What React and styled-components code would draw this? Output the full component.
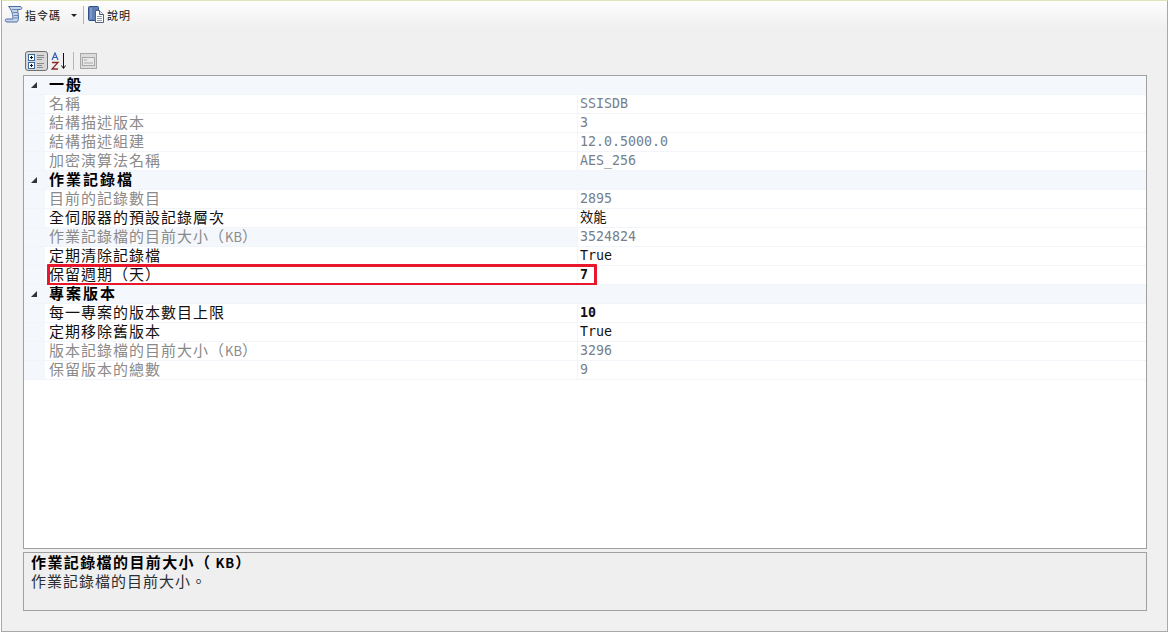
import React from "react";
import styled, { createGlobalStyle } from "styled-components";

const GlobalStyle = createGlobalStyle`
  html, body {
    margin: 0;
    padding: 0;
    background: #fff;
  }
`;

const cjk = `"Noto Sans CJK TC", "Noto Sans", sans-serif`;
const mono = `"DejaVu Sans Mono", "Liberation Mono", monospace`;

const Page = styled.div`
  width: 1167px;
  height: 632px;
  margin-left: 1px;
  box-sizing: border-box;
  display: flex;
  flex-direction: column;
  background: #f0f0f0;
  border-top: 1px solid #dfe3b8;
  border-left: 1px solid #a9a9a9;
  border-right: 1px solid #a9a9a9;
  border-bottom: 1px solid #a9a9a9;
  font-family: ${cjk};
`;

const Toolbar = styled.div`
  height: 27px;
  flex: none;
  display: flex;
  align-items: center;
  padding-left: 2px;
  background: linear-gradient(#fdfdfd, #f0f0f0);
`;

const ToolButton = styled.div`
  display: flex;
  align-items: center;
  gap: 1px;
  font-size: 11px;
  letter-spacing: 1px;
  color: #111;
`;

const Caret = styled.span`
  width: 0;
  height: 0;
  margin: 2px 6px 0 10px;
  border-left: 3px solid transparent;
  border-right: 3px solid transparent;
  border-top: 3px solid #222;
`;

const Sep = styled.span`
  width: 1px;
  height: 18px;
  margin-right: 3px;
  background: #b5b5b5;
`;

const Content = styled.div`
  flex: 1;
  display: flex;
  flex-direction: column;
  padding: 21px 20px 20px 21px;
  min-height: 0;
`;

const GridBar = styled.div`
  height: 26px;
  flex: none;
  box-sizing: border-box;
  display: flex;
  align-items: center;
  gap: 3px;
  padding: 0 0 2px 2px;

  ${Sep} {
    margin: 0 3px 0 2px;
  }
`;

const ModeButton = styled.div`
  width: ${(p) => (p.$active ? "23px" : "17px")};
  height: ${(p) => (p.$active ? "20px" : "16px")};
  display: flex;
  align-items: center;
  justify-content: center;
  box-sizing: border-box;
  border-radius: 3px;
  border: ${(p) => (p.$active ? "1px solid #6f6f6f" : "none")};
  background: ${(p) => (p.$active ? "#d8d8d8" : "transparent")};
`;

const Grid = styled.div`
  flex: 1;
  min-height: 0;
  box-sizing: border-box;
  background: #fff;
  border: 1px solid #a0a0a0;
`;

const Row = styled.div`
  position: relative;
  height: 19px;
  box-sizing: border-box;
  display: grid;
  grid-template-columns: 21px 532px 1fr;
  background: #f4f7fc;
  border-bottom: 1px solid #f1f4f9;
`;

const Gutter = styled.div`
  display: flex;
  align-items: center;
  justify-content: center;
`;

const Arrow = styled.span`
  width: 0;
  height: 0;
  margin: 0 1px 0 0;
  border-left: 6px solid transparent;
  border-bottom: 6px solid #333;
`;

const Name = styled.div`
  padding-left: 4px;
  font-size: 15px;
  line-height: 16px;
  letter-spacing: 1px;
  white-space: nowrap;
  background: ${(p) => (p.$selected ? "#f4f7fc" : "#fff")};
  color: ${(p) => (p.$readOnly ? "#8a8a8a" : "#111")};
`;

const Latin = styled.span`
  font-size: 13px;
  letter-spacing: 0;
`;

const Value = styled.div`
  padding-left: 2px;
  font-family: ${mono}, ${cjk};
  font-size: 13.3px;
  line-height: 18px;
  background: #fff;
  border-left: 1px solid #f1f4f9;
  font-weight: ${(p) => (p.$modified ? 700 : 400)};
  color: ${(p) => (p.$readOnly ? "#76808c" : "#111")};
`;

const CategoryName = styled.div`
  grid-column: 2 / 4;
  padding-left: 4px;
  font-size: 15px;
  line-height: 16px;
  letter-spacing: 2px;
  font-weight: 700;
  color: #000;
`;

const Highlight = styled.div`
  position: absolute;
  left: 23px;
  top: -2px;
  width: 550px;
  height: 22px;
  box-sizing: border-box;
  border: 3px solid #e8172c;
  border-radius: 1px;
  pointer-events: none;
`;

const Description = styled.div`
  flex: none;
  height: 59px;
  margin-top: 3px;
  box-sizing: border-box;
  padding: 0 7px;
  background: #efefef;
  border: 1px solid #a0a0a0;
  font-size: 15px;
  line-height: 18px;
  letter-spacing: 1px;
  color: #2a2f36;
`;

const DescTitle = styled.div`
  font-weight: 700;
  letter-spacing: 1.4px;
  color: #000;

  ${Latin} {
    padding-left: 4px;
    letter-spacing: 1px;
  }
`;

const sections = [
  {
    title: "一般",
    rows: [
      { name: "名稱", value: "SSISDB", readOnly: true },
      { name: "結構描述版本", value: "3", readOnly: true },
      { name: "結構描述組建", value: "12.0.5000.0", readOnly: true },
      { name: "加密演算法名稱", value: "AES_256", readOnly: true },
    ],
  },
  {
    title: "作業記錄檔",
    rows: [
      { name: "目前的記錄數目", value: "2895", readOnly: true },
      { name: "全伺服器的預設記錄層次", value: "效能" },
      {
        name: "作業記錄檔的目前大小",
        unit: "KB",
        value: "3524824",
        readOnly: true,
        selected: true,
      },
      { name: "定期清除記錄檔", value: "True" },
      { name: "保留週期（天）", value: "7", modified: true, boxed: true },
    ],
  },
  {
    title: "專案版本",
    rows: [
      { name: "每一專案的版本數目上限", value: "10", modified: true },
      { name: "定期移除舊版本", value: "True" },
      { name: "版本記錄檔的目前大小", unit: "KB", value: "3296", readOnly: true },
      { name: "保留版本的總數", value: "9", readOnly: true },
    ],
  },
];

const ScriptIcon = () => (
  <svg width="20" height="20" viewBox="0 0 20 20">
    <path
      d="M4.500 1.500H16c2 0 2.500 3 .500 3h-3c.500 3 1 6 1 9 0 1-.500 2.500-1.500 3.500H3c-2 0-2.500-3-.500-3H9c0-3-.500-6-2-9-.700-1.500-1.500-2.500-2.500-3.500z"
      fill="#c4d5ee"
      stroke="#4f6c9e"
    />
    <path d="M8 4.500h5M9 7.500h4M10 10.500h4M10 13h4" stroke="#6f88b2" />
  </svg>
);

const HelpIcon = () => (
  <svg width="19" height="19" viewBox="0 0 19 19">
    <rect x="1.500" y="1.500" width="10" height="14" rx="1" fill="#5f7fb5" stroke="#2f4f85" />
    <path d="M4 3v11" stroke="#9db4da" />
    <path d="M8.500 5.500h4l4 4v8h-8z" fill="#fff" stroke="#51607a" />
    <path d="M12.500 5.500v4h4" fill="#dbe3ef" stroke="#51607a" />
    <path d="M10 11.500h5M10 13.500h5M10 15.500h5" stroke="#8a97ad" />
  </svg>
);

const CategorizedIcon = () => (
  <svg width="17" height="15" viewBox="0 0 17 15">
    <rect x="0.500" y="0.500" width="6" height="6" fill="#fff" stroke="#3a6ea5" />
    <rect x="0.500" y="8.500" width="6" height="6" fill="#fff" stroke="#3a6ea5" />
    <path d="M2 3.500h3M3.500 2v3M2 11.500h3M3.500 10v3" stroke="#111" />
    <path d="M9 1.500h7M9 3.500h7M9 5.500h5M9 9.500h7M9 11.500h5M9 13.500h6" stroke="#8a8a8a" />
  </svg>
);

const SortIcon = () => (
  <svg width="17" height="18" viewBox="0 0 17 18">
    <path d="M1 8l3-7 3 7M2.300 5.500h3.400" fill="none" stroke="#2f5fb5" strokeWidth="1.200" />
    <path d="M1 10.500h6L1 17h6" fill="none" stroke="#8a2a2a" strokeWidth="1.300" />
    <path d="M12.500 1v15M10.500 13.500l2 3 2-3" fill="none" stroke="#111" strokeWidth="1" />
  </svg>
);

const PagesIcon = () => (
  <svg width="17" height="16" viewBox="0 0 17 16">
    <rect x="0.500" y="0.500" width="16" height="15" fill="#dcdcdc" stroke="#a8a8a8" />
    <rect x="2.500" y="4.500" width="12" height="8" fill="#e9e9e9" stroke="#a8a8a8" />
    <path d="M4 7h3M4 10h9" stroke="#a8a8a8" />
  </svg>
);

const withUnit = (name, unit) =>
  unit ? (
    <>
      {name}（<Latin>{unit}</Latin>）
    </>
  ) : (
    name
  );

export default function App() {
  return (
    <>
      <GlobalStyle />
      <Page>
        <Toolbar>
          <ToolButton>
            <ScriptIcon />
            指令碼
          </ToolButton>
          <Caret />
          <Sep />
          <ToolButton>
            <HelpIcon />
            說明
          </ToolButton>
        </Toolbar>
        <Content>
          <GridBar>
            <ModeButton $active>
              <CategorizedIcon />
            </ModeButton>
            <SortIcon />
            <Sep />
            <ModeButton>
              <PagesIcon />
            </ModeButton>
          </GridBar>
          <Grid>
            {sections.map((section) => (
              <React.Fragment key={section.title}>
                <Row>
                  <Gutter>
                    <Arrow />
                  </Gutter>
                  <CategoryName>{section.title}</CategoryName>
                </Row>
                {section.rows.map((row) => (
                  <Row key={row.name}>
                    <Gutter />
                    <Name $readOnly={row.readOnly} $selected={row.selected}>
                      {withUnit(row.name, row.unit)}
                    </Name>
                    <Value $readOnly={row.readOnly} $modified={row.modified}>
                      {row.value}
                    </Value>
                    {row.boxed && <Highlight />}
                  </Row>
                ))}
              </React.Fragment>
            ))}
          </Grid>
          <Description>
            <DescTitle>{withUnit("作業記錄檔的目前大小", "KB")}</DescTitle>
            作業記錄檔的目前大小。
          </Description>
        </Content>
      </Page>
    </>
  );
}
